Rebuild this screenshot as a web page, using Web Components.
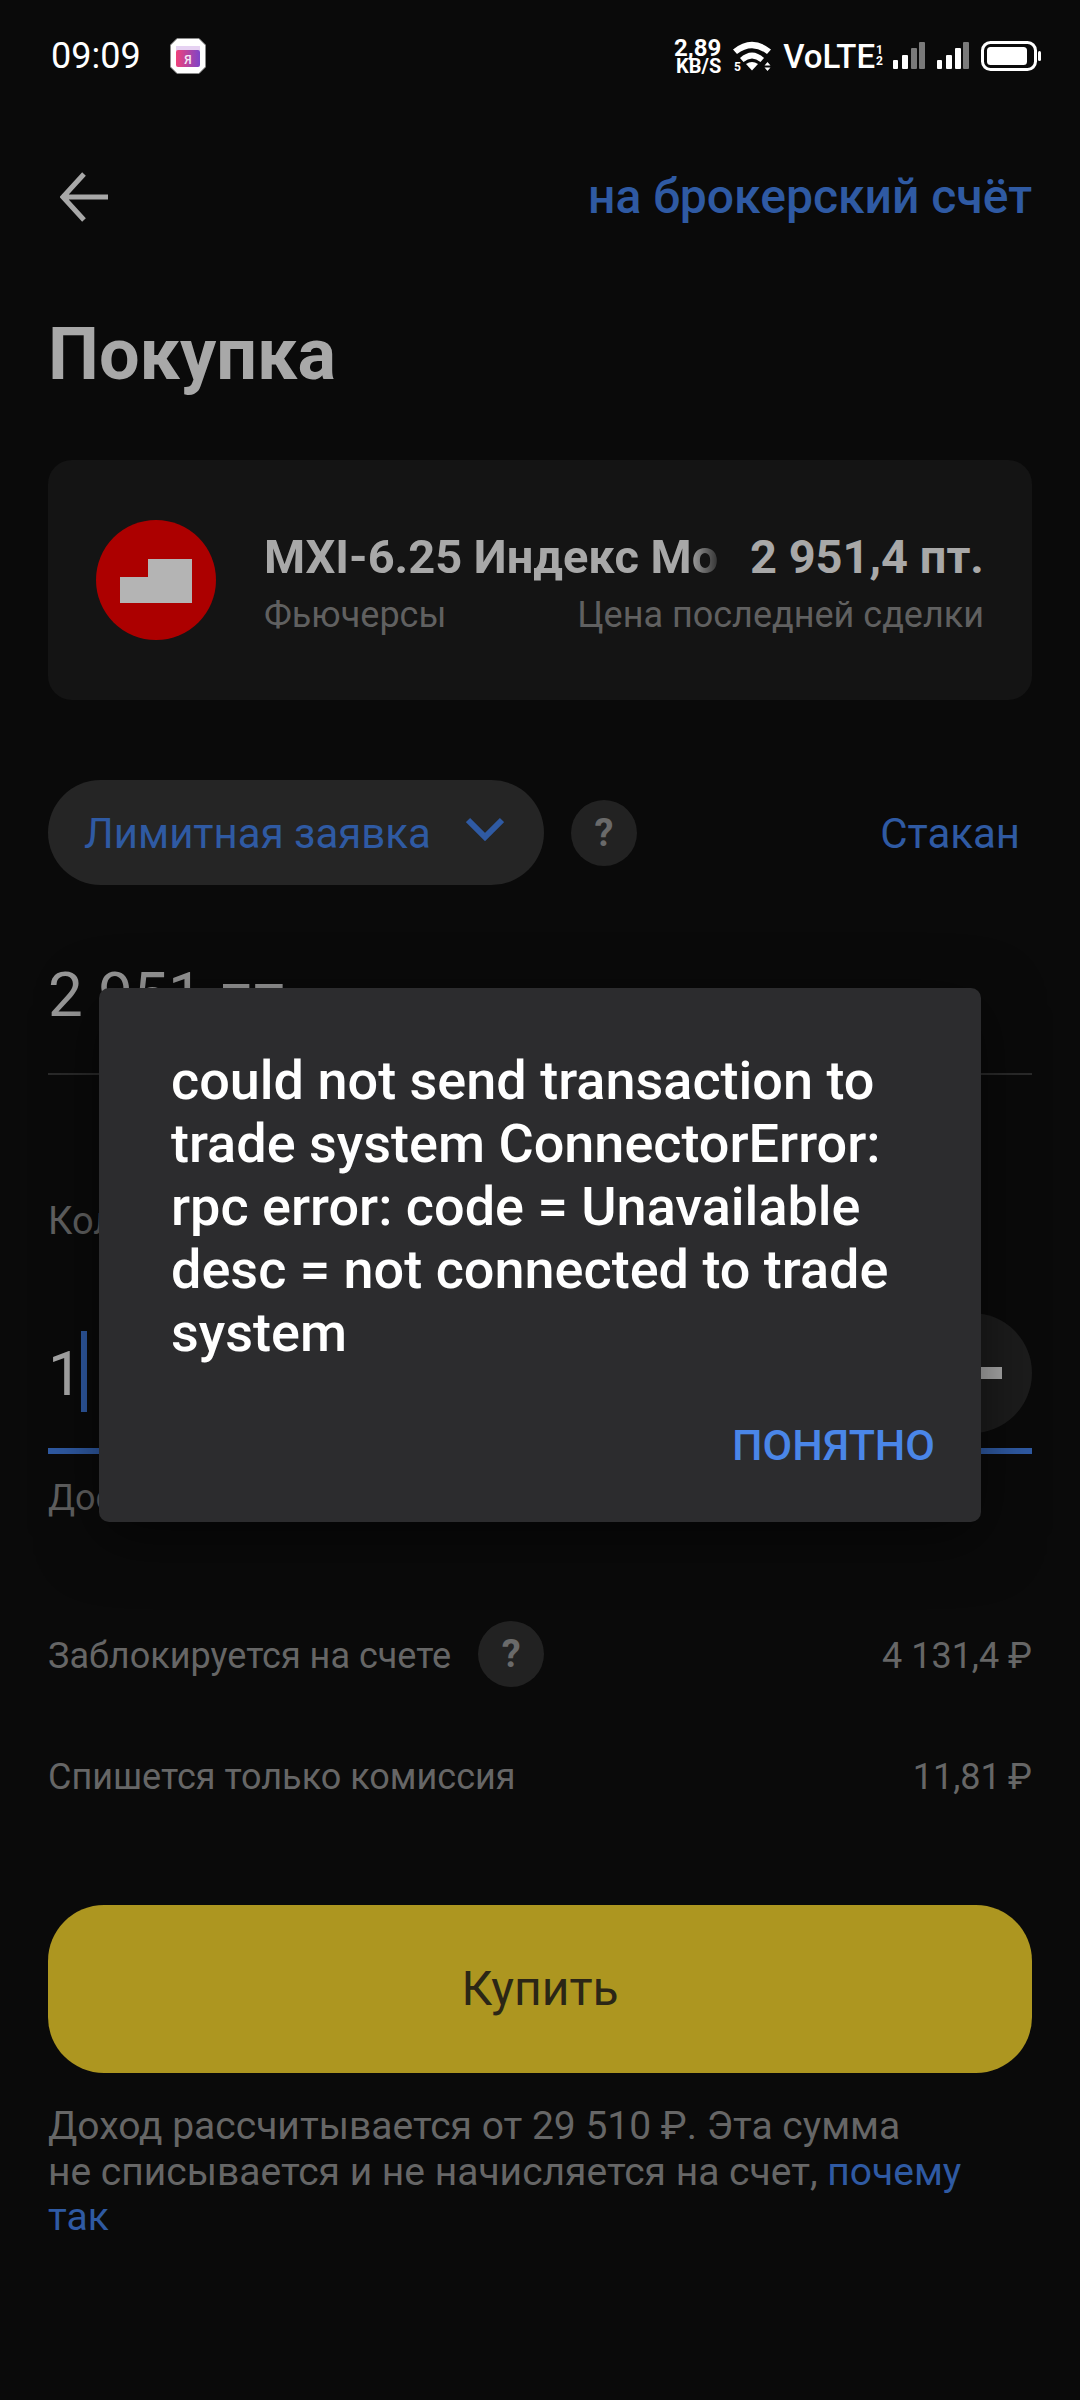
<!DOCTYPE html>
<html lang="ru">
<head>
<meta charset="utf-8">
<title>Покупка</title>
<style>
  html, body { margin: 0; padding: 0; }
  body {
    width: 1080px;
    height: 2400px;
    overflow: hidden;
    position: relative;
    background: #0a0a0a;
    font-family: Roboto, "Noto Sans", sans-serif;
  }
</style>
</head>
<body>
<status-bar></status-bar>
<nav-bar>на брокерский счёт</nav-bar>
<page-title>Покупка</page-title>
<instrument-card></instrument-card>
<order-type></order-type>
<price-field></price-field>
<qty-field></qty-field>
<info-row style="margin-top:110px" help>
  Заблокируется на счете
  <span slot="value">4 131,4 ₽</span>
</info-row>
<info-row style="margin-top:68px">
  Спишется только комиссия
  <span slot="value">11,81&#8201;₽</span>
</info-row>
<buy-button>Купить</buy-button>
<foot-note>Доход рассчитывается от 29 510 ₽. Эта сумма<br>не списывается и не начисляется на счет, <a>почему<br>так</a></foot-note>
<error-dialog action="ПОНЯТНО">could not send transaction to trade system ConnectorError: rpc error: code = Unavailable desc = not connected to trade system</error-dialog>

<script>
function define(name, html) {
  customElements.define(
    name,
    class extends HTMLElement {
      constructor() {
        super();
        this.attachShadow({ mode: "open" });
        this.shadowRoot.innerHTML = html;
      }
    }
  );
}

const helpIcon = `<span class="help">?</span>`;
const helpStyle = `
  .help {
    flex: none;
    width: 66px;
    height: 66px;
    border-radius: 50%;
    background: #222222;
    color: #6a6a6a;
    font: 700 38px/66px Roboto, sans-serif;
    text-align: center;
  }
`;

define("status-bar", `
  <style>
    :host {
      display: flex;
      align-items: center;
      height: 112px;
      padding: 0 39px 0 51px;
      color: #fff;
    }
    .time { font: 400 36px/1 Roboto, sans-serif; }
    .app { margin-left: 29px; display: block; }
    .right { margin-left: auto; display: flex; align-items: center; }
    .speed {
      display: flex;
      flex-direction: column;
      align-items: flex-end;
      font: 700 24px/20px Roboto, sans-serif;
    }
    .speed small { font: 700 20px/17px Roboto, sans-serif; }
    .wifi { margin-left: 11px; display: block; }
    .volte { margin-left: 11px; font: 500 33px/1 Roboto, sans-serif; }
    .sims {
      display: flex;
      flex-direction: column;
      margin-left: 1px;
      font: 700 12px/11px Roboto, sans-serif;
    }
    .sig { display: block; }
    .sig.a { margin-left: 10px; }
    .sig.b { margin-left: 12px; }
    .bat { margin-left: 12px; display: block; }
  </style>
  <span class="time">09:09</span>
  <svg class="app" width="36" height="36" viewBox="0 0 36 36">
    <defs>
      <linearGradient id="yg" x1="0" x2="1" y1="0" y2="0">
        <stop offset="0" stop-color="#f0417a"/>
        <stop offset="1" stop-color="#7d45c8"/>
      </linearGradient>
    </defs>
    <path d="M7 0.5H29L35.5 7V29L29 35.5H7L0.5 29V7Z" fill="#fff" stroke="#8a8a8a" stroke-width="1"/>
    <rect x="6" y="8" width="24" height="5" fill="#e6d2f2"/>
    <rect x="6" y="12" width="24" height="17" rx="2" fill="url(#yg)"/>
    <text x="18" y="25.500" font-family="Roboto, sans-serif" font-size="12" font-weight="500" fill="#f5e8f5" text-anchor="middle">Я</text>
  </svg>
  <div class="right">
    <div class="speed"><span>2,89</span><small>KB/S</small></div>
    <svg class="wifi" width="40" height="34" viewBox="0 0 40 34">
      <path d="M1 10.500Q20 -5 39 10.500L35 15Q20 3.500 5 15Z" fill="#fff"/>
      <path d="M8 19Q20 8 32 19L28.500 23Q20 16 11.500 23Z" fill="#fff"/>
      <path d="M14 25Q20 21 26 25L20 31.500Z" fill="#fff"/>
      <path d="M35.500 23L38.500 26.500H32.500Z M32.500 28.500H38.500L35.500 32Z" fill="#fff"/>
      <text x="2" y="32" font-family="Roboto, sans-serif" font-size="12" font-weight="700" fill="#fff">5</text>
    </svg>
    <span class="volte">VoLTE</span>
    <div class="sims"><span>1</span><span>2</span></div>
    <svg class="sig a" width="32" height="28" viewBox="0 0 32 28">
      <rect x="0" y="18" width="5" height="9" rx="1" fill="#fff"/>
      <rect x="9" y="13" width="6" height="14" rx="1" fill="#fff"/>
      <rect x="18" y="6" width="6" height="21" rx="1" fill="#7a7a7a"/>
      <rect x="26" y="0" width="6" height="27" rx="1" fill="#7a7a7a"/>
    </svg>
    <svg class="sig b" width="32" height="28" viewBox="0 0 32 28">
      <rect x="0" y="18" width="5" height="9" rx="1" fill="#fff"/>
      <rect x="9" y="13" width="6" height="14" rx="1" fill="#fff"/>
      <rect x="18" y="6" width="6" height="21" rx="1" fill="#fff"/>
      <rect x="26" y="0" width="6" height="27" rx="1" fill="#7a7a7a"/>
    </svg>
    <svg class="bat" width="60" height="30" viewBox="0 0 60 30">
      <rect x="1.500" y="1.500" width="53" height="27" rx="8" fill="none" stroke="#fff" stroke-width="3"/>
      <rect x="6" y="6" width="40" height="18" rx="3.500" fill="#fff"/>
      <rect x="57" y="10" width="3" height="10" rx="1.500" fill="#fff"/>
    </svg>
  </div>
`);

define("nav-bar", `
  <style>
    :host {
      display: flex;
      align-items: center;
      justify-content: space-between;
      height: 170px;
      padding: 0 48px 0 60px;
    }
    svg { display: block; }
    .link { color: #2f5aa3; font: 500 48px/1 Roboto, sans-serif; }
  </style>
  <svg width="48" height="50" viewBox="0 0 48 50" fill="none" stroke="#a8a8a8" stroke-width="5">
    <path d="M2 25H48M24 2L3 25L24 48"/>
  </svg>
  <span class="link"><slot></slot></span>
`);

define("page-title", `
  <style>
    :host {
      display: block;
      padding: 33px 48px 0;
      color: #a8a8a8;
      font: 700 72px/80px Roboto, sans-serif;
    }
  </style>
  <slot></slot>
`);

define("instrument-card", `
  <style>
    :host {
      display: flex;
      align-items: center;
      height: 240px;
      box-sizing: border-box;
      margin: 65px 48px 0;
      padding: 0 48px;
      border-radius: 24px;
      background: #141414;
    }
    .logo { flex: none; display: block; }
    .info {
      flex: 1;
      min-width: 0;
      margin-left: 48px;
      padding-top: 6px;
      display: flex;
      flex-direction: column;
      gap: 10px;
    }
    .row { display: flex; justify-content: space-between; gap: 24px; white-space: nowrap; }
    .name {
      flex: 1;
      min-width: 0;
      -webkit-mask-image: linear-gradient(to right, #000 92%, transparent 100%);
      mask-image: linear-gradient(to right, #000 92%, transparent 100%);
    }
    .main { color: #a8a8a8; font: 700 47px/54px Roboto, sans-serif; }
    .sub { color: #606060; font: 400 36px/42px Roboto, sans-serif; }
  </style>
  <svg class="logo" width="120" height="120" viewBox="0 0 120 120">
    <circle cx="60" cy="60" r="60" fill="#ac0000"/>
    <path d="M24 57H52V39H96V83H24Z" fill="#b4b4b4"/>
  </svg>
  <div class="info">
    <div class="row main">
      <div class="name">MXI-6.25 Индекс Мо</div>
      <div>2 951,4 пт.</div>
    </div>
    <div class="row sub">
      <div>Фьючерсы</div>
      <div>Цена последней сделки</div>
    </div>
  </div>
`);

define("order-type", `
  <style>
    :host {
      display: flex;
      align-items: center;
      margin: 80px 48px 0;
      padding-right: 12px;
    }
    .pill {
      display: flex;
      align-items: center;
      height: 105px;
      width: 496px;
      box-sizing: border-box;
      padding: 3px 40px 0 36px;
      border-radius: 53px;
      background: #252525;
      color: #2f5aa3;
      font: 400 42px/1 Roboto, sans-serif;
    }
    .pill svg { margin: -10px 0 0 auto; display: block; }
    .side { margin-left: auto; padding-top: 3px; color: #2f5aa3; font: 400 42px/1 Roboto, sans-serif; }
    .help { margin-left: 27px; }
    ${helpStyle}
  </style>
  <div class="pill">
    <span>Лимитная заявка</span>
    <svg width="38" height="24" viewBox="0 0 38 24" fill="none" stroke="#2f5aa3" stroke-width="6">
      <path d="M2 3L19 20L36 3"/>
    </svg>
  </div>
  ${helpIcon}
  <span class="side">Стакан</span>
`);

define("price-field", `
  <style>
    :host {
      display: block;
      margin: 70px 48px 0;
      height: 120px;
      box-sizing: border-box;
      padding-top: 5px;
      border-bottom: 2px solid #2a2a2a;
      color: #989898;
      font: 400 62px/70px Roboto, sans-serif;
    }
  </style>
  2 951 пт
`);

define("qty-field", `
  <style>
    :host { display: block; margin: 0 48px; }
    .label {
      padding-top: 123px;
      height: 117px;
      color: #606060;
      font: 400 38px/46px Roboto, sans-serif;
    }
    .input {
      display: flex;
      height: 135px;
      border-bottom: 6px solid #2f5aa3;
      margin-top: -2px;
    }
    .num { color: #a8a8a8; margin-top: 31px; font: 400 61px/1 Roboto, sans-serif; }
    .caret { width: 6px; height: 81px; margin: 18px 0 0 -1px; background: #2f5aa3; }
    .step {
      margin-left: auto;
      width: 120px;
      height: 120px;
      border-radius: 50%;
      background: #1c1c1c;
      display: flex;
      align-items: center;
      justify-content: center;
    }
    .step i { display: block; width: 60px; height: 12px; background: #aaaaaa; }
    .hint { color: #606060; font: 400 36px/42px Roboto, sans-serif; padding-top: 23px; }
  </style>
  <div class="label">Количество</div>
  <div class="input">
    <span class="num">1</span>
    <span class="caret"></span>
    <span class="step"><i></i></span>
  </div>
  <div class="hint">Доступно</div>
`);

customElements.define(
  "info-row",
  class extends HTMLElement {
    constructor() {
      super();
      this.attachShadow({ mode: "open" });
      this.shadowRoot.innerHTML = `
        <style>
          :host {
            display: flex;
            align-items: center;
            min-height: 53px;
            padding: 0 48px;
            color: #666666;
            font: 400 36px/42px Roboto, sans-serif;
          }
          .help { margin: -8px 0 -5px 27px; }
          .val { margin-left: auto; }
          ${helpStyle}
        </style>
        <slot></slot>
        ${this.hasAttribute("help") ? helpIcon : ""}
        <span class="val"><slot name="value"></slot></span>
      `;
    }
  }
);

define("buy-button", `
  <style>
    :host {
      display: flex;
      align-items: center;
      justify-content: center;
      height: 168px;
      margin: 102px 48px 0;
      border-radius: 56px;
      background: #ad9620;
      color: #2b2616;
      font: 400 48px/1 Roboto, sans-serif;
    }
  </style>
  <slot></slot>
`);

define("foot-note", `
  <style>
    :host {
      display: block;
      margin: 31px 48px 0;
      color: #666666;
      font: 400 39px/45.500px Roboto, sans-serif;
    }
    ::slotted(a) { color: #2f5aa3; }
  </style>
  <slot></slot>
`);

customElements.define(
  "error-dialog",
  class extends HTMLElement {
    constructor() {
      super();
      this.attachShadow({ mode: "open" });
      this.shadowRoot.innerHTML = `
        <style>
          :host {
            position: absolute;
            left: 99px;
            top: 988px;
            width: 882px;
            height: 534px;
            box-sizing: border-box;
            padding: 61px 46px 0 72px;
            border-radius: 10px;
            background: #2c2c2e;
            box-shadow: 0 16px 60px rgba(0, 0, 0, .5);
            display: flex;
            flex-direction: column;
          }
          .msg { color: #fff; font: 500 54px/63px Roboto, sans-serif; }
          .act {
            margin-top: 55px;
            align-self: flex-end;
            color: #4a86e8;
            font: 500 43px/52px Roboto, sans-serif;
          }
        </style>
        <div class="msg"><slot></slot></div>
        <div class="act">${this.getAttribute("action")}</div>
      `;
    }
  }
);
</script>
</body>
</html>
